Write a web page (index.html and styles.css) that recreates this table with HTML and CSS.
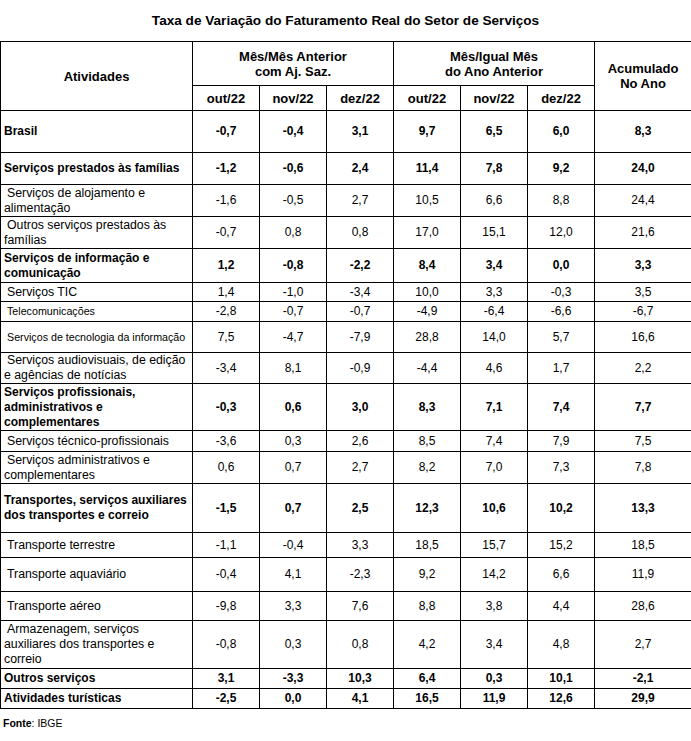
FILE: index.html
```html
<!DOCTYPE html>
<html lang="pt-BR">
<head>
<meta charset="utf-8">
<title>Taxa de Variação do Faturamento Real do Setor de Serviços</title>
<link rel="stylesheet" href="styles.css">
</head>
<body>
<h1 class="title">Taxa de Variação do Faturamento Real do Setor de Serviços</h1>
<table class="data">
  <colgroup>
    <col class="c-label"><col class="c-num"><col class="c-num"><col class="c-num"><col class="c-num"><col class="c-num"><col class="c-num"><col class="c-acc">
  </colgroup>
  <thead>
    <tr class="h1">
      <th rowspan="2">Atividades</th>
      <th colspan="3">Mês/Mês Anterior<br>com Aj. Saz.</th>
      <th colspan="3">Mês/Igual Mês<br>do Ano Anterior</th>
      <th rowspan="2">Acumulado<br>No Ano</th>
    </tr>
    <tr class="h2">
      <th>out/22</th><th>nov/22</th><th>dez/22</th><th>out/22</th><th>nov/22</th><th>dez/22</th>
    </tr>
  </thead>
  <tbody>
    <tr class="b r42"><td class="lbl">Brasil</td><td>-0,7</td><td>-0,4</td><td>3,1</td><td>9,7</td><td>6,5</td><td>6,0</td><td>8,3</td></tr>
    <tr class="b r32"><td class="lbl">Serviços prestados às famílias</td><td>-1,2</td><td>-0,6</td><td>2,4</td><td>11,4</td><td>7,8</td><td>9,2</td><td>24,0</td></tr>
    <tr class="r32"><td class="lbl sub">Serviços de alojamento e<br>alimentação</td><td>-1,6</td><td>-0,5</td><td>2,7</td><td>10,5</td><td>6,6</td><td>8,8</td><td>24,4</td></tr>
    <tr class="r32"><td class="lbl sub">Outros serviços prestados às<br>famílias</td><td>-0,7</td><td>0,8</td><td>0,8</td><td>17,0</td><td>15,1</td><td>12,0</td><td>21,6</td></tr>
    <tr class="b r34"><td class="lbl">Serviços de informação e<br>comunicação</td><td>1,2</td><td>-0,8</td><td>-2,2</td><td>8,4</td><td>3,4</td><td>0,0</td><td>3,3</td></tr>
    <tr class="r19"><td class="lbl sub">Serviços TIC</td><td>1,4</td><td>-1,0</td><td>-3,4</td><td>10,0</td><td>3,3</td><td>-0,3</td><td>3,5</td></tr>
    <tr class="r20"><td class="lbl sub small">Telecomunicações</td><td>-2,8</td><td>-0,7</td><td>-0,7</td><td>-4,9</td><td>-6,4</td><td>-6,6</td><td>-6,7</td></tr>
    <tr class="r31"><td class="lbl sub small">Serviços de tecnologia da informação</td><td>7,5</td><td>-4,7</td><td>-7,9</td><td>28,8</td><td>14,0</td><td>5,7</td><td>16,6</td></tr>
    <tr class="r31"><td class="lbl sub">Serviços audiovisuais, de edição<br>e agências de notícias</td><td>-3,4</td><td>8,1</td><td>-0,9</td><td>-4,4</td><td>4,6</td><td>1,7</td><td>2,2</td></tr>
    <tr class="b r47"><td class="lbl">Serviços profissionais,<br>administrativos e<br>complementares</td><td>-0,3</td><td>0,6</td><td>3,0</td><td>8,3</td><td>7,1</td><td>7,4</td><td>7,7</td></tr>
    <tr class="r21"><td class="lbl sub">Serviços técnico-profissionais</td><td>-3,6</td><td>0,3</td><td>2,6</td><td>8,5</td><td>7,4</td><td>7,9</td><td>7,5</td></tr>
    <tr class="r32"><td class="lbl sub">Serviços administrativos e<br>complementares</td><td>0,6</td><td>0,7</td><td>2,7</td><td>8,2</td><td>7,0</td><td>7,3</td><td>7,8</td></tr>
    <tr class="b r49"><td class="lbl">Transportes, serviços auxiliares<br>dos transportes e correio</td><td>-1,5</td><td>0,7</td><td>2,5</td><td>12,3</td><td>10,6</td><td>10,2</td><td>13,3</td></tr>
    <tr class="r25"><td class="lbl sub">Transporte terrestre</td><td>-1,1</td><td>-0,4</td><td>3,3</td><td>18,5</td><td>15,7</td><td>15,2</td><td>18,5</td></tr>
    <tr class="r34"><td class="lbl sub">Transporte aquaviário</td><td>-0,4</td><td>4,1</td><td>-2,3</td><td>9,2</td><td>14,2</td><td>6,6</td><td>11,9</td></tr>
    <tr class="r29"><td class="lbl sub">Transporte aéreo</td><td>-9,8</td><td>3,3</td><td>7,6</td><td>8,8</td><td>3,8</td><td>4,4</td><td>28,6</td></tr>
    <tr class="r48"><td class="lbl sub">Armazenagem, serviços<br>auxiliares dos transportes e<br>correio</td><td>-0,8</td><td>0,3</td><td>0,8</td><td>4,2</td><td>3,4</td><td>4,8</td><td>2,7</td></tr>
    <tr class="b r20"><td class="lbl">Outros serviços</td><td>3,1</td><td>-3,3</td><td>10,3</td><td>6,4</td><td>0,3</td><td>10,1</td><td>-2,1</td></tr>
    <tr class="b r20"><td class="lbl">Atividades turísticas</td><td>-2,5</td><td>0,0</td><td>4,1</td><td>16,5</td><td>11,9</td><td>12,6</td><td>29,9</td></tr>
  </tbody>
</table>
<p class="source"><b>Fonte</b>: IBGE</p>
</body>
</html>
```

FILE: styles.css
```css
html, body {
  margin: 0;
  padding: 0;
  background: #fff;
  color: #000;
  font-family: "Liberation Sans", Arial, sans-serif;
}

.title {
  margin: 0;
  height: 41px;
  line-height: 41px;
  font-size: 13.6px;
  font-weight: bold;
  text-align: center;
}

.data {
  width: 691px;
  border-collapse: collapse;
  table-layout: fixed;
  font-size: 12px;
}

.c-label { width: 192px; }
.c-num { width: 67px; }
.c-acc { width: 97px; }

.data th,
.data td {
  border: 1px solid #000;
  padding: 0;
  text-align: center;
  vertical-align: middle;
  line-height: 15px;
}

.data th {
  font-size: 13px;
  font-weight: bold;
}

.h1 { height: 44px; }
.h2 { height: 25px; }

.data td.lbl {
  text-align: left;
  padding-left: 3px;
  padding-right: 0;
  font-size: 12.3px;
  white-space: nowrap;
}

.b td.lbl { font-size: 12px; }

.data td.sub { text-indent: 3px; }
.data td.small { font-size: 10.7px; }

.b td { font-weight: bold; }

.r19 { height: 19px; }
.r20 { height: 20px; }
.r21 { height: 21px; }
.r25 { height: 25px; }
.r29 { height: 29px; }
.r31 { height: 31px; }
.r32 { height: 32px; }
.r34 { height: 34px; }
.r42 { height: 42px; }
.r47 { height: 47px; }
.r48 { height: 48px; }
.r49 { height: 49px; }

.source {
  margin: 8px 0 0 3px;
  font-size: 10.5px;
}
```
